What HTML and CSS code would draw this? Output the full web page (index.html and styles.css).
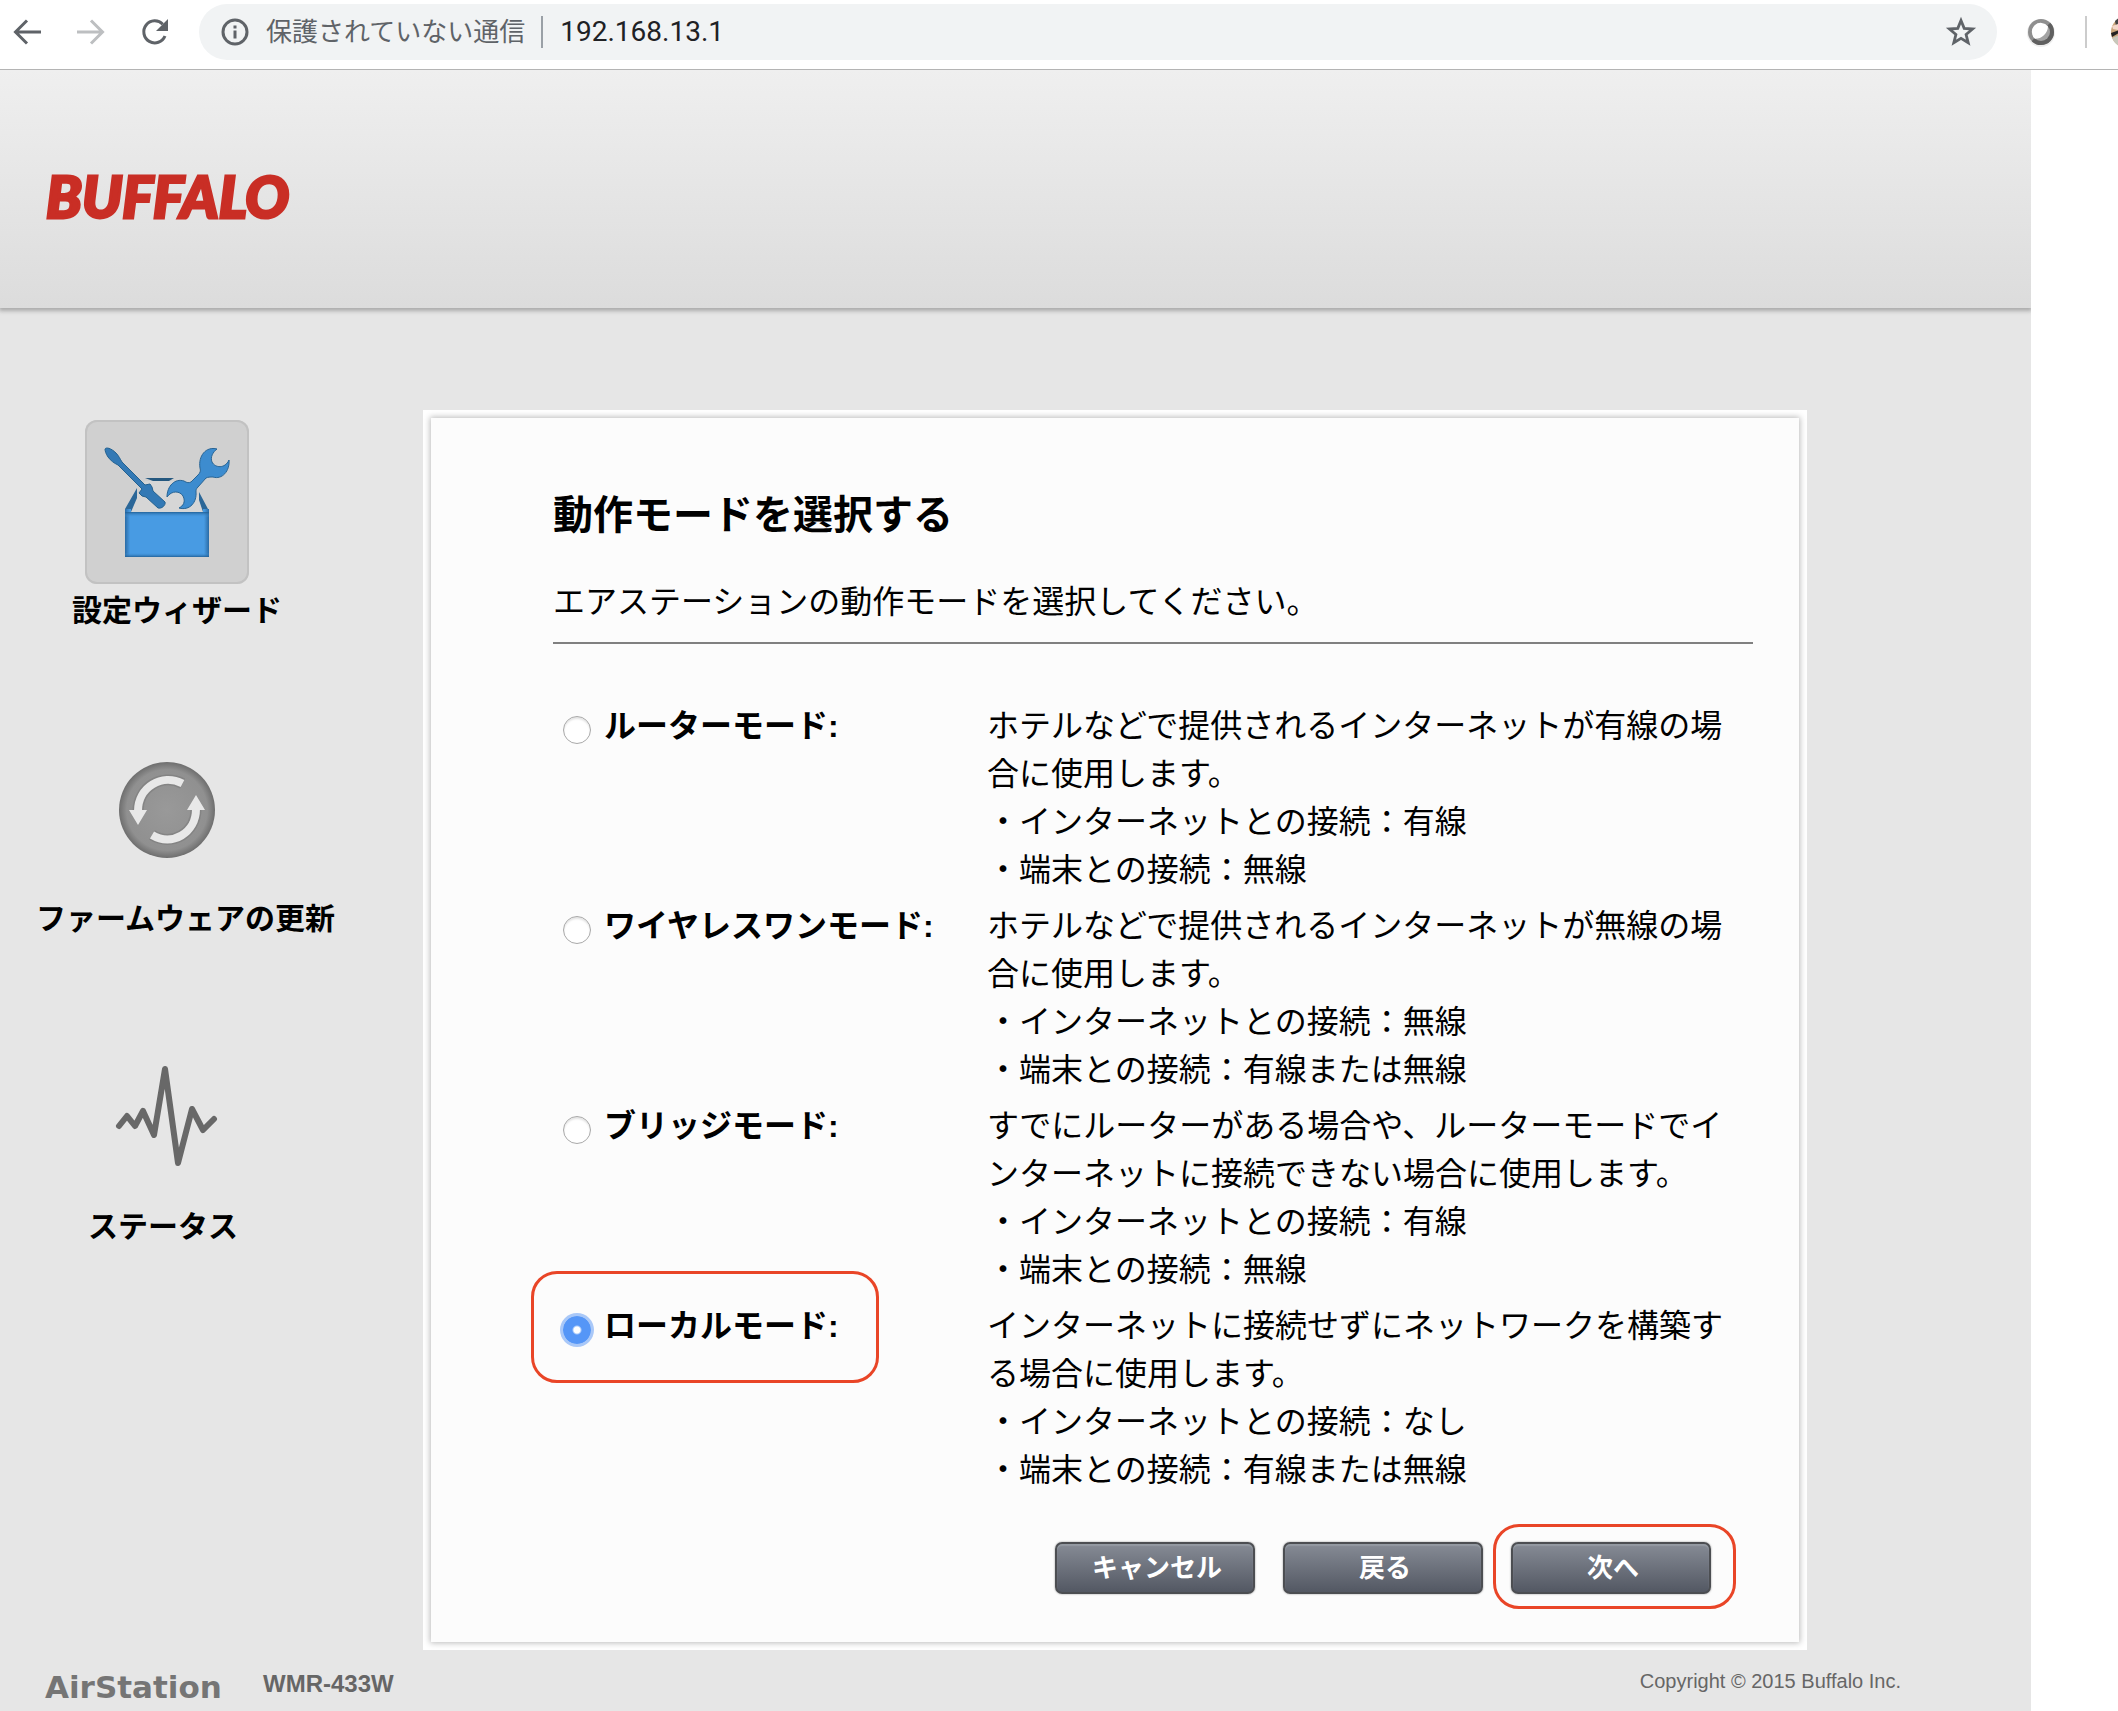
FILE: index.html
```html
<!DOCTYPE html>
<html lang="ja">
<head>
<meta charset="utf-8">
<title>AirStation WMR-433W</title>
<link rel="stylesheet" href="styles.css">
</head>
<body>
<div class="toolbar">
  <div class="toolbar-nav">
    <button class="tool" aria-label="戻る"><svg width="30" height="30" viewBox="0 0 30 30"><path d="M29 15H4M15 3.500L3.500 15L15 26.500" fill="none" stroke="#5f6368" stroke-width="3"/></svg></button>
    <button class="tool" aria-label="進む"><svg width="30" height="30" viewBox="0 0 30 30"><path d="M1 15H26M15 3.500L26.500 15L15 26.500" fill="none" stroke="#bdbfc1" stroke-width="3"/></svg></button>
    <button class="tool" aria-label="再読み込み"><svg width="30" height="30" viewBox="0 0 30 30"><path d="M25 19A11 11 0 1 1 22.800 7.300" fill="none" stroke="#5f6368" stroke-width="3"/><path d="M28 2V14H16Z" fill="#5f6368"/></svg></button>
  </div>
  <div class="address">
    <svg width="28" height="28" viewBox="0 0 28 28"><circle cx="14" cy="14" r="12" fill="none" stroke="#5f6368" stroke-width="3"/><path d="M14 12.500V20.500M14 7.500V10.500" stroke="#5f6368" stroke-width="3"/></svg>
    <span class="security">保護されていない通信</span>
    <span class="divider"></span>
    <span class="url">192.168.13.1</span>
    <button class="tool star" aria-label="ブックマーク"><svg width="32" height="32" viewBox="0 0 32 32"><path d="M16 4.500L19.200 12.400L27.600 13L21.100 18.500L23.200 26.800L16 22.300L8.800 26.800L10.900 18.500L4.400 13L12.800 12.400Z" fill="none" stroke="#5f6368" stroke-width="2.800"/></svg></button>
  </div>
  <div class="extras">
    <svg width="30" height="30" viewBox="0 0 30 30"><circle cx="15" cy="16" r="14" fill="#eee"/><circle cx="15" cy="15" r="13" fill="#8f8f8f"/><path d="M24.200 5.800A13 13 0 0 1 5.800 24.200L10 19L20 10Z" fill="#606060"/><circle cx="15" cy="15" r="9" fill="#a3a3a3"/><path d="M22 9.400A9 9 0 1 0 9 21.700A13 13 0 0 0 22 9.400Z" fill="#fff"/></svg>
    <span class="divider light"></span>
    <svg class="avatar" width="32" height="32" viewBox="0 0 32 32"><circle cx="16" cy="16" r="16" fill="#c9a67c"/><path d="M4 5A16 16 0 0 1 16 0V8L5 10Z" fill="#444"/><path d="M1 10L7 8V14L2 13Z" fill="#f4d8ca"/><path d="M0 17L8 14V17L1 21Z" fill="#222"/><path d="M1 22L8 19V30A16 16 0 0 1 1 22Z" fill="#c8c8bc"/></svg>
  </div>
</div>

<div class="page">
  <header class="masthead"><span class="brand">BUFFALO</span></header>
  <div class="columns">
    <nav class="sidebar">
      <a class="nav-item" href="#wizard">
        <span class="tile selected"><svg width="164" height="164" viewBox="0 0 164 164">
          <defs>
            <linearGradient id="box" x1="0" x2="1" y1="0" y2="0"><stop offset="0" stop-color="#2a6ba5"/><stop offset=".06" stop-color="#489be3"/><stop offset=".94" stop-color="#489be3"/><stop offset="1" stop-color="#2a6ba5"/></linearGradient>
            <linearGradient id="edge" x1="0" x2="0" y1="0" y2="1"><stop offset="0" stop-color="#1f5d92" stop-opacity=".9"/><stop offset=".12" stop-color="#489be3" stop-opacity="0"/><stop offset=".9" stop-color="#489be3" stop-opacity="0"/><stop offset="1" stop-color="#1f5d92" stop-opacity=".9"/></linearGradient>
          </defs>
          <path d="M46 92L52 76L60 61H95L114 76L118 92Z" fill="#d6d6d6"/>
          <path d="M60 58H89L84 61H68Z" fill="#25587f"/>
          <path d="M52 68L40 89V92H46L52 78ZM114 72L123 89V92H118L114 80Z" fill="#2b6798"/>
          <path d="M40 89H46V92H118V89H124V137H40Z" fill="url(#box)"/>
          <path d="M40 92H124V137H40Z" fill="url(#edge)"/>
          <path d="M20 29C21 27 26 28 31 33C34 36 35 39 37 42L60 65L65 64L67 67L68 71L80 82C81 85 77 89 73 88L61 77L57 76L54 73L57 69L33 45C29 43 26 41 23 37C21 34 20 31 20 29Z" fill="#3379b5" stroke="#23618f" stroke-width="1"/>
          <path d="M132 29C121 26 113 36 115 48C116 51 115 53 113 55L106 62C104 63 102 63 99 61C90 58 82 66 82 77C87 70 95 71 98 76C101 82 98 86 94 88C105 91 112 82 111 72C111 70 111 69 113 67L121 58C123 57 125 57 128 57C137 60 145 51 144 40C140 49 130 48 127 42C125 37 128 32 132 29Z" fill="#3d8ccf" stroke="#286494" stroke-width="1"/>
        </svg></span>
        <span class="nav-label start-72">設定ウィザード</span>
      </a>
      <a class="nav-item" href="#firmware">
        <span class="tile"><svg width="98" height="98" viewBox="0 0 98 98">
          <defs><radialGradient id="disc"><stop offset="0" stop-color="#999"/><stop offset=".84" stop-color="#909090"/><stop offset="1" stop-color="#6e6e6e"/></radialGradient></defs>
          <circle cx="49" cy="49" r="48" fill="url(#disc)"/>
          <g fill="none" stroke="#777" stroke-width="11" opacity=".5"><path d="M64.500 22.500C44 12 20 26 20 50"/><path d="M34 74C54 86 78 72 78 48"/></g>
          <g fill="none" stroke="#e8e8e8" stroke-width="8"><path d="M64.500 22.500C44 12 20 26 20 50"/><path d="M34 74C54 86 78 72 78 48"/></g>
          <path d="M11 49H29L20 64ZM69 49H87L78 34Z" fill="#e8e8e8"/>
        </svg></span>
        <span class="nav-label start-36">ファームウェアの更新</span>
      </a>
      <a class="nav-item" href="#status">
        <span class="tile"><svg width="104" height="110" viewBox="0 0 104 110"><path d="M4 63L12 53L20 63L28 48L39 72L50 6L63 100L77 46L88 67L99 56" fill="none" stroke="#686868" stroke-width="6" stroke-linecap="round" stroke-linejoin="round"/></svg></span>
        <span class="nav-label start-88">ステータス</span>
      </a>
    </nav>

    <main class="frame">
      <form class="panel">
        <h1>動作モードを選択する</h1>
        <p class="lead">エアステーションの動作モードを選択してください。</p>
        <div class="modes">
          <div class="mode">
            <div class="choice"><input type="radio" name="mode" id="router"><label for="router">ルーターモード:</label></div>
            <div class="about"><p>ホテルなどで提供されるインターネットが有線の場合に使用します。</p><p>・インターネットとの接続：有線</p><p>・端末との接続：無線</p></div>
          </div>
          <div class="mode">
            <div class="choice"><input type="radio" name="mode" id="wireless"><label for="wireless">ワイヤレスワンモード:</label></div>
            <div class="about"><p>ホテルなどで提供されるインターネットが無線の場合に使用します。</p><p>・インターネットとの接続：無線</p><p>・端末との接続：有線または無線</p></div>
          </div>
          <div class="mode">
            <div class="choice"><input type="radio" name="mode" id="bridge"><label for="bridge">ブリッジモード:</label></div>
            <div class="about"><p>すでにルーターがある場合や、ルーターモードでインターネットに接続できない場合に使用します。</p><p>・インターネットとの接続：有線</p><p>・端末との接続：無線</p></div>
          </div>
          <div class="mode">
            <div class="choice"><input type="radio" name="mode" id="local" checked><label for="local">ローカルモード:</label><span class="mark mark-choice"></span></div>
            <div class="about"><p>インターネットに接続せずにネットワークを構築する場合に使用します。</p><p>・インターネットとの接続：なし</p><p>・端末との接続：有線または無線</p></div>
          </div>
        </div>
        <div class="actions">
          <button type="button" class="action">キャンセル</button>
          <button type="button" class="action">戻る</button>
          <span class="marked"><button type="button" class="action">次へ</button><span class="mark mark-action"></span></span>
        </div>
      </form>
    </main>
  </div>
  <footer class="footer">
    <span class="product">AirStation</span>
    <span class="model">WMR-433W</span>
    <span class="copyright">Copyright © 2015 Buffalo Inc.</span>
  </footer>
</div>
</body>
</html>
```
FILE: styles.css
```css
* { box-sizing: border-box; }

body {
  margin: 0;
  min-height: 100vh;
  display: flex;
  flex-direction: column;
  overflow-x: hidden;
  background: #fff;
  color: #000;
  font-family: "Liberation Sans", "Noto Sans CJK JP", sans-serif;
}

h1, p { margin: 0; }
svg { display: block; flex: none; }
button { font-family: inherit; }

/* Browser toolbar */
.toolbar {
  display: flex;
  align-items: center;
  height: 70px;
  padding: 0 0 6px 12px;
  border-bottom: 1px solid #b4b4b4;
  overflow: hidden;
}
.toolbar-nav { display: flex; gap: 34px; width: 187px; flex: none; }
.tool { padding: 0; border: 0; background: none; }
.address {
  flex: 1;
  display: flex;
  align-items: center;
  height: 56px;
  padding: 0 20px 0 22px;
  border-radius: 28px;
  background: #f1f3f4;
}
.security { margin-left: 17px; font-size: 26px; line-height: 36px; color: #5f6368; }
.divider { width: 2px; height: 32px; margin: 0 17px 0 16px; background: #9aa0a6; }
.url { font-family: Roboto, sans-serif; font-size: 28px; line-height: 36px; color: #202124; }
.star { margin-left: auto; }
.extras { display: flex; align-items: center; width: 121px; padding-left: 29px; flex: none; }
.light { flex: none; margin: 0 24px 0 29px; background: #ccc; }

/* Page */
.page {
  flex: 1;
  display: flex;
  flex-direction: column;
  margin-right: 87px;
  background: #e6e6e6;
}
.masthead {
  height: 238px;
  padding: 90px 46px 0;
  background: linear-gradient(#efefef, #dcdcdc);
  box-shadow: 0 2px 4px 1px #aaa;
  clip-path: inset(0 0 -8px 0);
}
.brand {
  display: block;
  font: italic 900 58px/72px Lato, sans-serif;
  color: #c92e25;
  -webkit-text-stroke: 3px #c92e25;
}
.columns { display: flex; padding-top: 102px; }

.sidebar { width: 423px; flex: none; display: flex; flex-direction: column; gap: 99px; padding-top: 10px; }
.nav-item { display: block; color: #000; text-decoration: none; }
.tile {
  display: flex;
  align-items: center;
  justify-content: center;
  width: 164px;
  height: 164px;
  margin-left: 85px;
}
.selected { border-radius: 12px; background: #d0d0d0; box-shadow: inset 0 0 0 2px #c2c2c2; }
.nav-label { display: block; height: 36px; margin-top: 9px; font-size: 30px; font-weight: bold; line-height: 36px; white-space: nowrap; }
.start-72 { padding-left: 72px; }
.start-36 { padding-left: 36px; }
.start-88 { padding-left: 88px; }

.frame { flex: 1; min-width: 0; margin-right: 224px; padding: 8px; background: #fff; }
.panel {
  padding: 71px 46px 48px 122px;
  background: #fcfcfc;
  box-shadow: 0 0 6px 1px #bbb;
}
h1 { font-size: 40px; line-height: 52px; }
.lead { margin-top: 37px; padding-bottom: 16px; border-bottom: 2px solid #808080; font-size: 32px; line-height: 48px; }
.modes { margin-top: 58px; display: flex; flex-direction: column; gap: 8px; font-size: 32px; line-height: 48px; }
.mode { display: grid; grid-template-columns: 434px 1fr; align-items: start; }
.choice { position: relative; display: flex; align-items: center; padding-left: 10px; font-weight: bold; }
.choice input {
  appearance: none;
  flex: none;
  width: 28px;
  height: 28px;
  margin: 8px 13px 0 0;
  border: 1px solid #a9a9a9;
  border-radius: 50%;
  background: #fff;
  box-shadow: inset 0 2px 2px #e4e4e4;
}
.choice input:checked {
  border: 0;
  background: radial-gradient(circle, #fff 3px, #5596f7 5px);
  box-shadow: 0 0 0 3px #a9c8f8;
}
.about { padding-right: 20px; }

.actions { display: flex; justify-content: flex-end; gap: 28px; margin-top: 48px; padding-right: 42px; }
.action {
  width: 200px;
  height: 52px;
  padding: 0 0 0 4px;
  border: 2px solid #4c4e52;
  border-radius: 7px;
  background: linear-gradient(#868b95, #535863);
  box-shadow: inset 0 2px 1px #949aa2, 0 0 2px #888;
  color: #fff;
  font-size: 26px;
  font-weight: bold;
  line-height: 44px;
}
.marked { position: relative; }

/* Red call-outs drawn over the controls */
.mark { position: absolute; border: 3px solid #e94527; border-radius: 26px; pointer-events: none; }
.mark-choice { left: -22px; top: -31px; width: 348px; height: 112px; }
.mark-action { left: -18px; top: -18px; width: 243px; height: 85px; }

.footer { display: flex; align-items: flex-start; padding: 12px 130px 0 45px; color: #666; }
.product { width: 218px; font: bold 31px/50px "DejaVu Sans", sans-serif; color: #757575; }
.model { font-size: 24px; font-weight: bold; line-height: 44px; }
.copyright { margin-left: auto; font-size: 20px; line-height: 38px; }
```
